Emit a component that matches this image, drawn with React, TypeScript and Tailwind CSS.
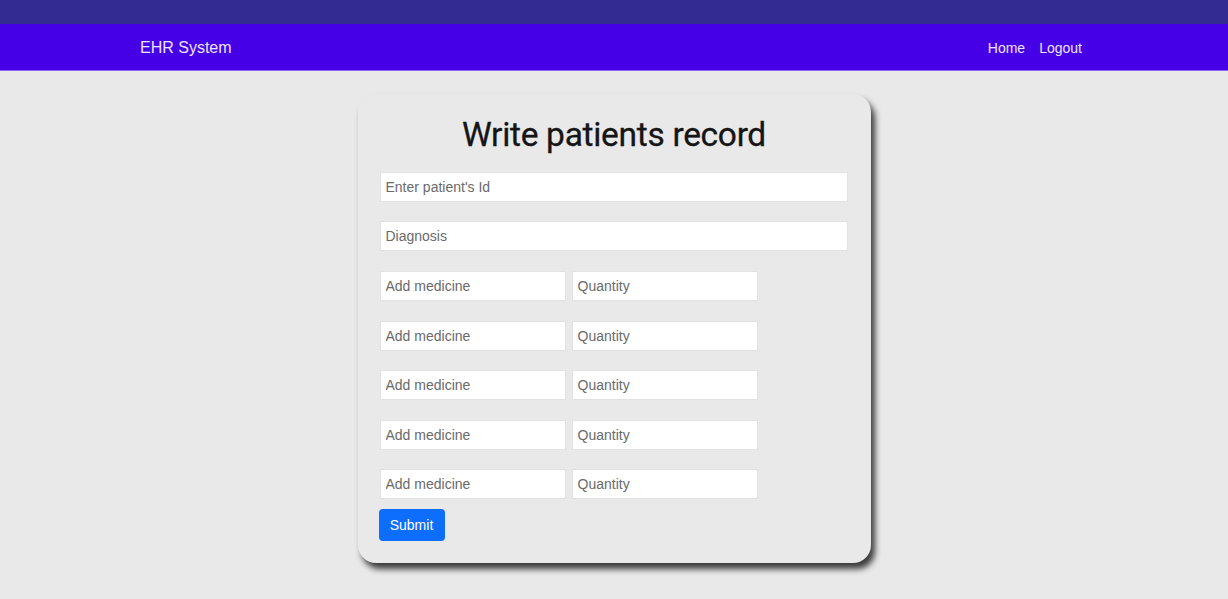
import React from 'react';

const font = { fontFamily: '"Liberation Sans", Arial, sans-serif' };

const inputCls =
  'h-[30px] bg-white border border-[#e2e2e2] px-[5px] text-[14px] text-[#333] placeholder:text-[#6a6a6a] outline-none';

export default function App() {
  const rows = [0, 1, 2, 3, 4];
  return (
    <div className="min-h-screen bg-[#e9e9e9] flex flex-col" style={font}>
      <div className="h-[24px] bg-[#332b8f]" />
      <nav className="h-[47px] bg-[#4500e6] border-b border-[#8a66f0] flex items-center justify-between pl-[140px] pr-[146px] pt-[2px]">
        <span className="text-white/90 text-[16px]">EHR System</span>
        <div className="flex gap-[14px] text-white/90 text-[14px]">
          <a>Home</a>
          <a>Logout</a>
        </div>
      </nav>

      <div className="flex justify-center pt-[23px]">
        <form className="w-[513px] h-[469px] rounded-[18px] bg-[#e9e9e9] shadow-[4px_6px_6px_rgba(0,0,0,0.75)] px-[22px] pt-[18px] flex flex-col">
          <h1 className="text-center text-[33.5px] font-normal text-[#151515] leading-[46px] tracking-[-0.3px] font-[Roboto,sans-serif] [-webkit-text-stroke:0.3px_#151515]">
            Write patients record
          </h1>
          <input className={`${inputCls} w-[468px] mt-[14px]`} placeholder="Enter patient's Id" />
          <input className={`${inputCls} w-[468px] mt-[19px]`} placeholder="Diagnosis" />
          <div className="flex flex-col gap-[19.5px] mt-[20px]">
            {rows.map((r) => (
              <div key={r} className="flex gap-[6px]">
                <input className={`${inputCls} w-[186px]`} placeholder="Add medicine" />
                <input className={`${inputCls} w-[186px]`} placeholder="Quantity" />
              </div>
            ))}
          </div>
          <button
            type="button"
            className="mt-[10px] w-[66px] h-[32px] rounded-[4px] bg-[#0d6efd] text-white text-[14px] -ml-[1px]"
          >
            Submit
          </button>
        </form>
      </div>
    </div>
  );
}
